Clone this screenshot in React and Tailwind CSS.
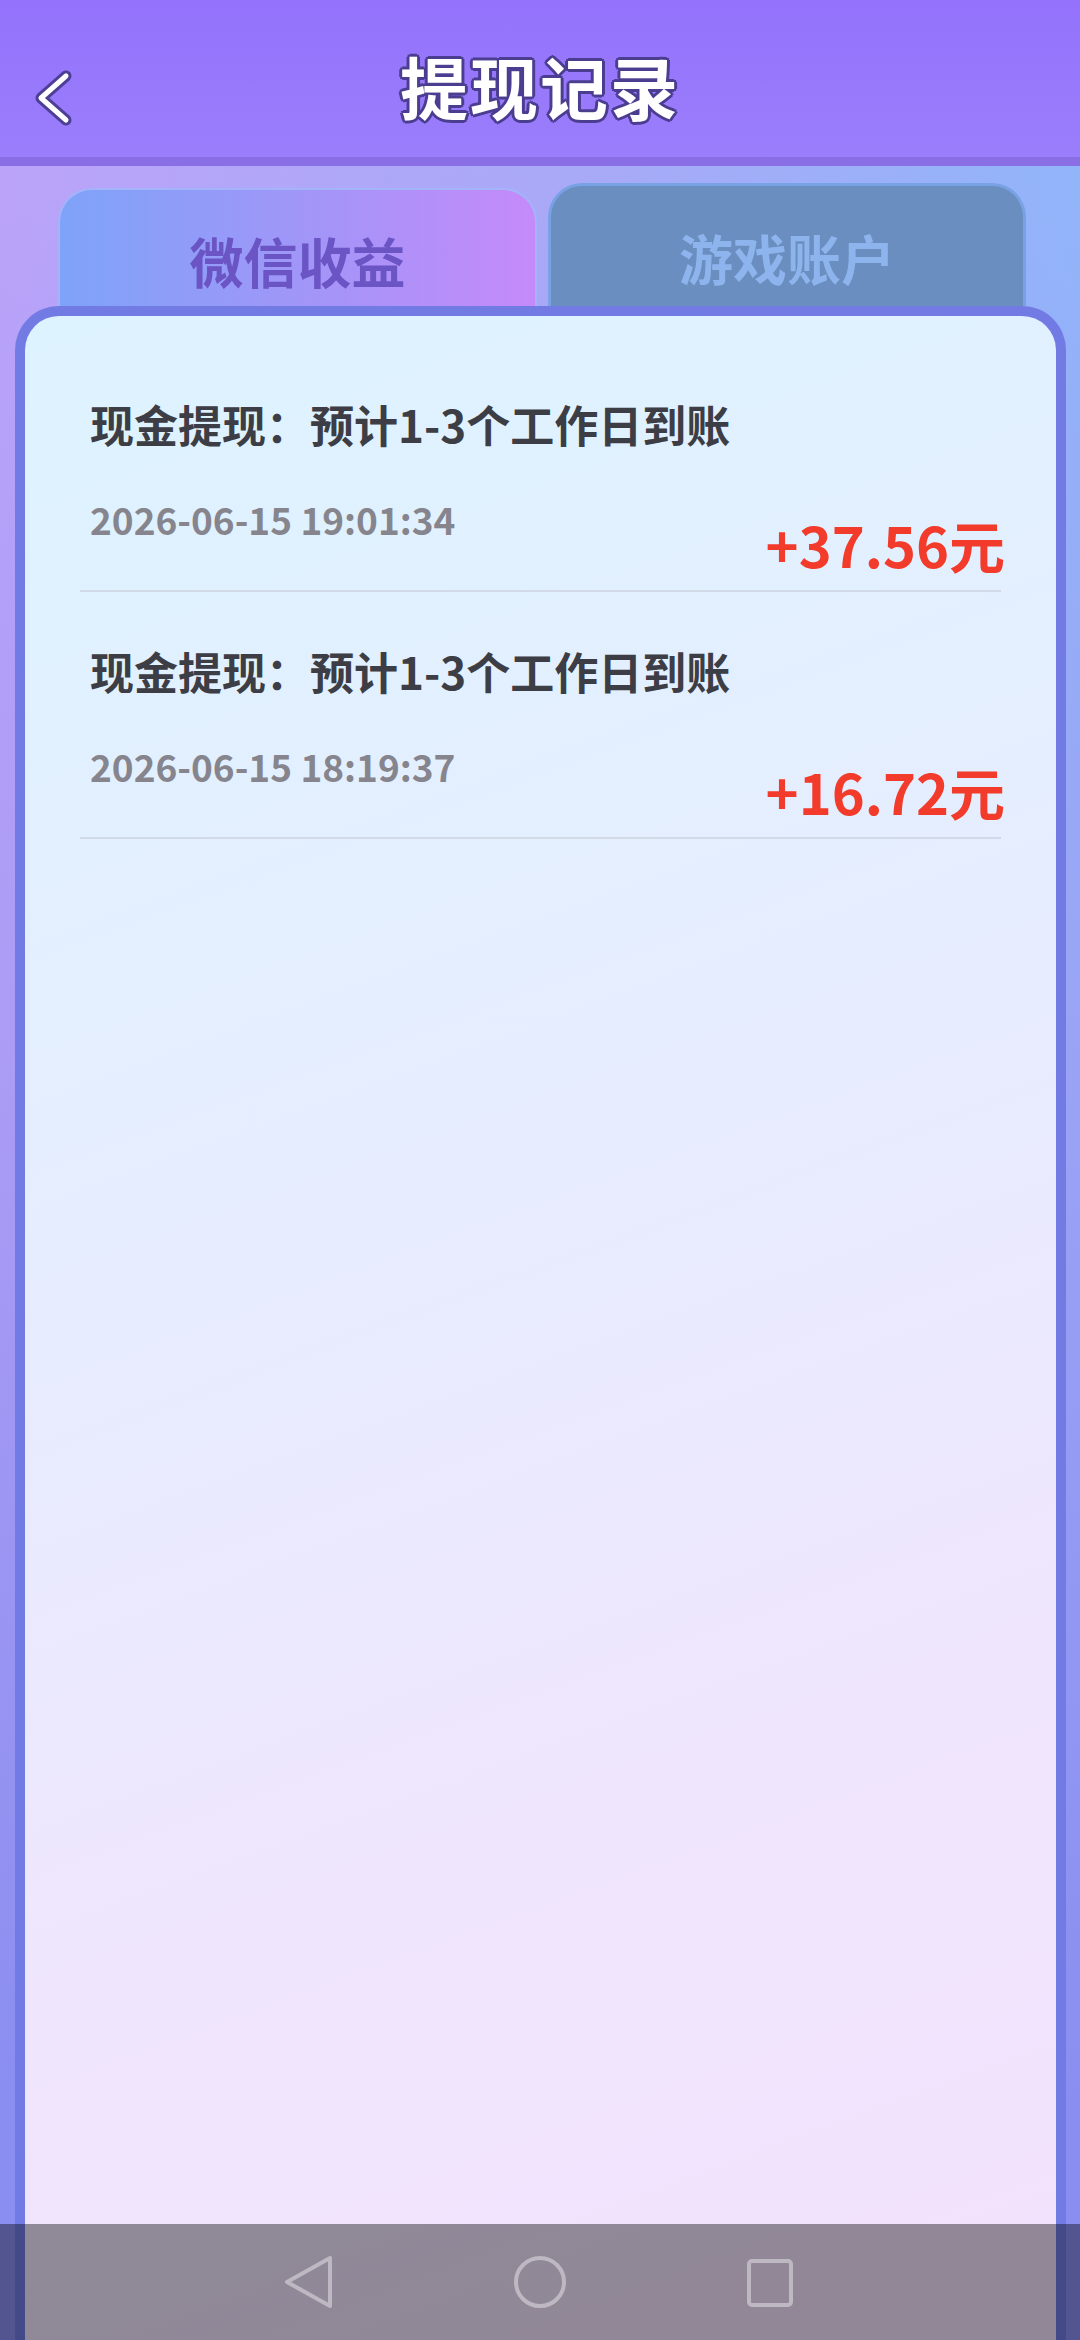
import React from 'react';

const records = [
    { title: '现金提现：预计1-3个工作日到账', time: '2026-06-15 19:01:34', amount: '+37.56元' },
    { title: '现金提现：预计1-3个工作日到账', time: '2026-06-15 18:19:37', amount: '+16.72元' },
];

const BackChevron = () => (
    <svg width="48" height="72" viewBox="0 0 48 72" className="absolute left-[28px] top-[62px]">
        <polyline points="38,14 13,36 38,58" fill="none" stroke="#4d3f95" strokeWidth="11" strokeLinecap="round" strokeLinejoin="round" />
        <polyline points="38,14 13,36 38,58" fill="none" stroke="#ffffff" strokeWidth="5" strokeLinecap="round" strokeLinejoin="round" />
    </svg>
);

const RecordItem = ({ title, time, amount }) => (
    <div className="pt-[53px] pb-[14px] border-b-2 border-[#d2dae8]">
        <div className="pl-[10px] text-[44px] leading-[52px] font-bold text-[#3d3d45]">{title}</div>
        <div className="mt-[47px] flex justify-between items-start">
            <div className="pl-[10px] text-[37px] leading-[44px] font-bold text-[#86858d]">{time}</div>
            <div className="mt-[15px] mr-[-4px] text-[56px] leading-[64px] font-bold text-[#f23b2b]">{amount}</div>
        </div>
    </div>
);

const App = () => {
    return (
        <div className="relative w-[1080px] h-[2340px] overflow-hidden flex flex-col font-['Noto_Sans_CJK_SC','Noto_Sans',sans-serif] bg-[linear-gradient(180deg,rgba(138,142,240,0)_0%,rgba(160,150,242,0.6)_45%,#8a8ef0_90%),linear-gradient(90deg,#bda5fa_0%,#a9acf8_55%,#90b8fa_100%)]">
            {/* header */}
            <div className="relative h-[166px] shrink-0 bg-[linear-gradient(180deg,#9472fc_0%,#9a7efb_100%)] border-b-[9px] border-[#8a6ee6] flex items-center justify-center">
                <BackChevron />
                <h1 className="mt-[14px] text-[68px] leading-none font-bold text-white tracking-[2px] [text-shadow:3px_0_0_#4b3d90,-3px_0_0_#4b3d90,0_3px_0_#4b3d90,0_-3px_0_#4b3d90,2px_2px_0_#4b3d90,-2px_2px_0_#4b3d90,2px_-2px_0_#4b3d90,-2px_-2px_0_#4b3d90]">
                    提现记录
                </h1>
            </div>

            {/* tabs */}
            <div className="shrink-0 flex items-end gap-[11px] pl-[58px] pt-[17px]">
                <div className="w-[479px] h-[118px] rounded-t-[34px] border-2 border-b-0 border-[#a3b4fa] bg-[linear-gradient(90deg,#7ea3f8_0%,#a096f8_50%,#c58af9_100%)] flex items-center justify-center">
                    <span className="mt-[26px] text-[54px] leading-none font-bold text-[#6b54c4]">微信收益</span>
                </div>
                <div className="w-[478px] h-[123px] rounded-t-[34px] border-[3px] border-b-0 border-[#79a2e4] bg-[#6a8ebf] flex items-center justify-center">
                    <span className="mt-[24px] text-[54px] leading-none font-bold text-[#8db4ec]">游戏账户</span>
                </div>
            </div>

            {/* card */}
            <div className="ml-[15px] w-[1051px] flex-1 rounded-t-[44px] border-[10px] border-b-0 border-[#727ae3] bg-[linear-gradient(160deg,#ddf3ff_0%,#e6edfe_40%,#efe6fd_70%,#f3e1fc_100%)]">
                <div className="px-[55px] pt-[29px]">
                    {records.map((r, i) => (
                        <RecordItem key={i} {...r} />
                    ))}
                </div>
            </div>

            {/* system nav bar */}
            <div className="absolute left-0 bottom-0 w-full h-[116px] bg-black/40 flex items-center justify-center">
                <svg width="1080" height="116" viewBox="0 0 1080 116">
                    <polygon points="287,58 330,34 330,82" fill="none" stroke="#bdb8c2" strokeWidth="4" strokeLinejoin="round" />
                    <circle cx="540" cy="58" r="24" fill="none" stroke="#bdb8c2" strokeWidth="4" />
                    <rect x="749" y="37" width="42" height="44" rx="3" fill="none" stroke="#bdb8c2" strokeWidth="4" />
                </svg>
            </div>
        </div>
    );
};

export default App;
